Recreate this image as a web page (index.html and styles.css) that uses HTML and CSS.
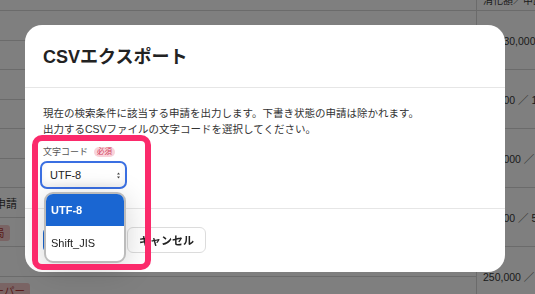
FILE: index.html
```html
<!DOCTYPE html>
<html lang="ja">
<head>
    <meta charset="UTF-8">
    <meta name="viewport" content="width=device-width, initial-scale=1.0">
    <title>CSVエクスポート</title>
    <link rel="stylesheet" href="styles.css">
</head>
<body>
    <!-- 背景の申請一覧 -->
    <div class="list">
        <div class="list-head">
            <div class="head-main"></div>
            <div class="head-amount">消化額／申請額</div>
        </div>
        <div class="record">
            <div class="subs"><div class="sub"></div><div class="sub"></div></div>
            <div class="amount">¥1,130,000</div>
        </div>
        <div class="record">
            <div class="subs"><div class="sub"></div><div class="sub"></div></div>
            <div class="amount">80,000 ／ 100,000</div>
        </div>
        <div class="record">
            <div class="subs"><div class="sub"></div><div class="sub"></div></div>
            <div class="amount">120,000 ／ 300,000</div>
        </div>
        <div class="record">
            <div class="subs">
                <div class="sub"><span class="cut-text">交通費申請</span></div>
                <div class="sub"><span class="tag tag-short">局</span></div>
            </div>
            <div class="amount">40,000 ／ 50,000</div>
        </div>
        <div class="record">
            <div class="subs">
                <div class="sub"></div>
                <div class="sub"><span class="tag tag-long">スーパー</span></div>
            </div>
            <div class="amount">250,000 ／ 300,000</div>
        </div>
    </div>

    <div class="overlay"></div>

    <div class="modal">
        <div class="modal-header">
            <h2 class="modal-title">CSVエクスポート</h2>
        </div>
        <div class="modal-body">
            <p class="modal-text">現在の検索条件に該当する申請を出力します。下書き状態の申請は除かれます。<br>出力するCSVファイルの文字コードを選択してください。</p>
            <div class="field-label">文字コード<span class="badge">必須</span></div>
            <div class="select">
                <span>UTF-8</span>
                <svg class="select-arrow" width="3" height="7" viewBox="0 0 3 7">
                    <path d="M0 2.5 L1.5 0.5 L3 2.5 Z M0 4.5 L1.5 6.5 L3 4.5 Z" fill="#444"/>
                </svg>
            </div>
        </div>
        <div class="modal-footer">
            <button class="btn btn-primary">出力</button>
            <button class="btn btn-cancel">キャンセル</button>
        </div>

        <!-- 開いた状態の選択肢 -->
        <div class="dropdown">
            <div class="option selected">UTF-8</div>
            <div class="option">Shift_JIS</div>
        </div>

        <!-- 注目枠 -->
        <div class="highlight"></div>
    </div>
</body>
</html>
```

FILE: styles.css
```css
body {
    margin: 0;
    padding: 0;
    height: 100vh;
    overflow: hidden;
    background-color: #fff;
    font-family: "Liberation Sans", "Noto Sans CJK JP", sans-serif;
    color: #333;
}

/* 背景の一覧 */
.list {
    width: 100%;
    font-size: 10.5px;
    color: #383838;
}
.list-head {
    display: grid;
    grid-template-columns: 476px 1fr;
    height: 10px;
    border-bottom: 1px solid #d6d6d6;
}
.head-amount {
    border-left: 1px solid #d6d6d6;
    padding-left: 6px;
    font-size: 10px;
    line-height: 10px;
    margin-top: -4px;
    overflow: hidden;
    white-space: nowrap;
}
.record {
    display: grid;
    grid-template-columns: 476px 1fr;
    height: 58px;
    border-bottom: 1px solid #d6d6d6;
}
.subs {
    display: flex;
    flex-direction: column;
}
.sub {
    height: 29px;
    display: flex;
    align-items: center;
    white-space: nowrap;
}
.sub:first-child {
    border-bottom: 1px solid #d6d6d6;
}
.amount {
    border-left: 1px solid #d6d6d6;
    padding-left: 6px;
    display: flex;
    align-items: center;
    white-space: nowrap;
    overflow: hidden;
}
.cut-text {
    margin-left: -38px;
    font-size: 11px;
}
.tag {
    display: inline-block;
    padding: 1px 5px;
    border-radius: 3px;
    background-color: #f4c9c9;
    color: #b23636;
    font-size: 10.5px;
    line-height: 14px;
}
.tag-short {
    margin-left: -11px;
}
.tag-long {
    margin-left: -22px;
    align-self: flex-start;
    margin-top: 6px;
}

.overlay {
    position: fixed;
    inset: 0;
    background-color: rgba(0, 0, 0, 0.5);
}

/* モーダル */
.modal {
    position: fixed;
    left: 25px;
    top: 25px;
    width: 480px;
    height: 247px;
    background-color: #fff;
    border-radius: 17px;
    display: flex;
    flex-direction: column;
}
.modal-header {
    height: 63px;
    padding: 0 18px 2px;
    box-sizing: border-box;
    display: flex;
    align-items: center;
    border-bottom: 1px solid #e6e6e6;
}
.modal-title {
    margin: 0;
    font-size: 18px;
    font-weight: bold;
    color: #222;
}
.modal-body {
    padding: 17px 18px 19px;
}
.modal-text {
    margin: 0;
    font-size: 10.5px;
    line-height: 16px;
    color: #333;
}
.field-label {
    margin-top: 9px;
    display: flex;
    align-items: center;
    font-size: 9px;
    line-height: 12px;
    color: #555;
}
.badge {
    margin-left: 6px;
    padding: 0 3px;
    border-radius: 5px;
    background-color: #f9d3da;
    color: #d2415d;
    font-size: 7.5px;
    line-height: 10px;
}
.select {
    margin-top: 3px;
    margin-left: -3px;
    width: 87px;
    height: 28px;
    box-sizing: border-box;
    border: 2px solid #3a6fe2;
    border-radius: 7px;
    padding: 0 4px 0 8px;
    display: flex;
    align-items: center;
    justify-content: space-between;
    font-size: 11px;
    color: #222;
    box-shadow: inset 0 -4px 6px rgba(0, 0, 0, 0.06);
}
.select-arrow {
    margin-right: 1px;
}
.modal-footer {
    border-top: 1px solid #e6e6e6;
    padding: 18px 18px;
    display: flex;
    gap: 6px;
}
.btn {
    height: 26px;
    border-radius: 6px;
    font-family: inherit;
    font-size: 11px;
    font-weight: bold;
    padding: 0;
}
.btn-primary {
    width: 78px;
    border: none;
    background-color: #1a66d2;
    color: #fff;
}
.btn-cancel {
    width: 79px;
    border: 1px solid #dcdcdc;
    background-color: #fff;
    color: #222;
}

/* 選択肢の一覧 */
.dropdown {
    position: absolute;
    left: 19px;
    top: 167px;
    width: 82px;
    height: 71px;
    box-sizing: border-box;
    border: 2px solid #bcbcbc;
    border-radius: 9px;
    overflow: hidden;
    background-color: #fff;
    box-shadow: 0 6px 30px rgba(0, 0, 0, 0.18);
}
.option {
    height: 34px;
    padding-left: 5px;
    display: flex;
    align-items: center;
    font-size: 11px;
    color: #222;
}
.option.selected {
    height: 32px;
    background-color: #1a66d2;
    color: #fff;
    font-weight: bold;
}

.highlight {
    position: absolute;
    left: 7px;
    top: 110px;
    width: 119px;
    height: 135px;
    box-sizing: border-box;
    border: 6px solid #fb2a6b;
    border-radius: 10px;
    pointer-events: none;
}
```
